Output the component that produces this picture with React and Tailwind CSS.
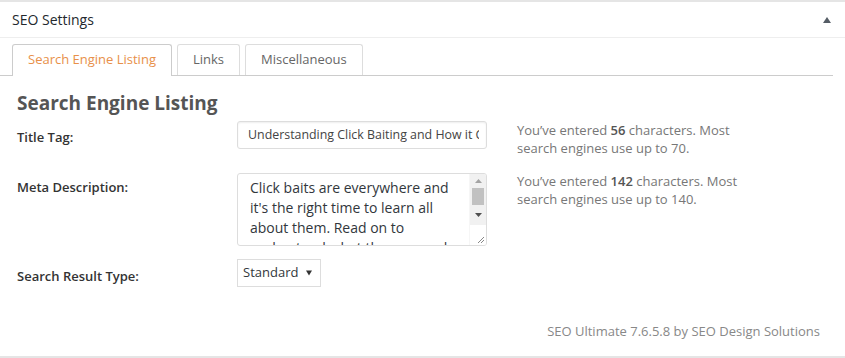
export default function App() {
  const rows = [
    { label: 'Title Tag:', count: '56', max: '70' },
    { label: 'Meta Description:', count: '142', max: '140' },
  ];

  return (
    <div className="w-[845px] h-[358px] bg-white font-['Open_Sans',sans-serif] text-[13px] text-[#444] border-t-2 border-[#e5e5e5] border-b-2 relative overflow-hidden">
      {/* header */}
      <div className="h-[36px] flex items-center justify-between pl-3 pr-[13px] border-b border-[#eeeeee]">
        <span className="text-[14px] text-[#23282d]">SEO Settings</span>
        <svg width="10" height="8" viewBox="0 0 10 8">
          <polygon points="5,1 9,7 1,7" fill="#555d66" />
        </svg>
      </div>

      {/* tabs */}
      <div className="mt-[6px] mr-3 flex items-end gap-[5px] pl-3 border-b border-[#cccccc] h-[32px]">
        <div className="h-[32px] px-[15px] flex items-center border border-b-0 border-[#cccccc] rounded-t-[3px] bg-white text-[#e8904a] -mb-px pb-px">
          Search Engine Listing
        </div>
        <div className="h-[31px] px-[15px] flex items-center border border-b-0 border-[#dddddd] rounded-t-[3px] text-[#666]">
          Links
        </div>
        <div className="h-[31px] px-[15px] flex items-center border border-b-0 border-[#dddddd] rounded-t-[3px] text-[#666]">
          Miscellaneous
        </div>
      </div>

      <div className="pl-[17px]">
        <h2 className="mt-[15px] text-[19px] font-bold text-[#555] leading-[24px]">Search Engine Listing</h2>

        {/* title tag */}
        <div className="mt-[6px] flex items-start">
          <div className="w-[220px] pt-[7px] font-semibold text-[#333]">{rows[0].label}</div>
          <div className="w-[250px] h-[28px] border border-[#dddddd] rounded-[3px] shadow-[inset_0_1px_2px_rgba(0,0,0,0.07)] pl-[10px] pr-[7px] flex items-center">
            <div className="overflow-hidden whitespace-nowrap text-[12.4px] text-[#444]">
              Understanding Click Baiting and How it Can Help You
            </div>
          </div>
          <div className="ml-[30px] leading-[18px] text-[#777]">
            You’ve entered <b className="font-semibold text-[#555]">{rows[0].count}</b> characters. Most<br />
            search engines use up to {rows[0].max}.
          </div>
        </div>

        {/* meta description */}
        <div className="mt-[16px] flex items-start">
          <div className="w-[220px] pt-[5px] font-semibold text-[#333]">{rows[1].label}</div>
          <div className="w-[250px] h-[73px] border border-[#dddddd] rounded-[3px] flex overflow-hidden">
            <div className="flex-1 pl-[12px] pr-[4px] pt-[4px] text-[14px] leading-[20px] text-[#32373c] overflow-hidden">
              Click baits are everywhere and it's the right time to learn all about them. Read on to understand what they are and why they matter.
            </div>
            <div className="w-[17px] flex flex-col bg-[#f1f1f1] border-l border-[#f6f6f6]">
              <div className="h-[14px] flex items-center justify-center">
                <svg width="7" height="4" viewBox="0 0 7 4"><polygon points="3.5,0 7,4 0,4" fill="#a3a3a3" /></svg>
              </div>
              <div className="mx-[2px] h-[17px] bg-[#c1c1c1]" />
              <div className="h-[20px] flex items-center justify-center">
                <svg width="7" height="4" viewBox="0 0 7 4"><polygon points="0,0 7,0 3.5,4" fill="#505050" /></svg>
              </div>
              <div className="flex-1 bg-white flex items-end justify-end pr-[1px] pb-[1px]">
                <svg width="8" height="8" viewBox="0 0 8 8">
                  <line x1="7" y1="1" x2="1" y2="7" stroke="#888" strokeWidth="1" />
                  <line x1="7" y1="4" x2="4" y2="7" stroke="#888" strokeWidth="1" />
                </svg>
              </div>
            </div>
          </div>
          <div className="ml-[30px] -mt-[1px] leading-[18px] text-[#777]">
            You’ve entered <b className="font-semibold text-[#555]">{rows[1].count}</b> characters. Most<br />
            search engines use up to {rows[1].max}.
          </div>
        </div>

        {/* search result type */}
        <div className="mt-[13px] flex items-center">
          <div className="w-[220px] pt-[7px] font-semibold text-[#333]">Search Result Type:</div>
          <div className="w-[84px] h-[28px] border border-[#dddddd] flex items-center pl-[5px] gap-[8px] text-[#32373c]">
            <span>Standard</span>
            <svg width="6" height="6" viewBox="0 0 6 6"><polygon points="0,0.5 6,0.5 3,5.5" fill="#333" /></svg>
          </div>
        </div>
      </div>

      <div className="absolute right-[25px] top-[320px] text-[#888] text-[13px]">
        SEO Ultimate 7.6.5.8 by SEO Design Solutions
      </div>
    </div>
  );
}
